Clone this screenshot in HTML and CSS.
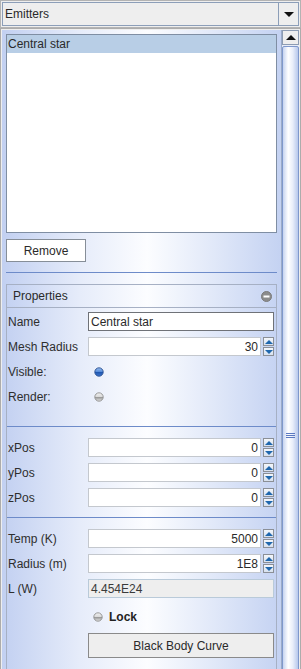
FILE: index.html
```html
<!DOCTYPE html>
<html>
<head>
<meta charset="utf-8">
<link rel="stylesheet" href="styles.css">
</head>
<body>
<div class="combo">
  <div class="combo-field">Emitters</div>
  <div class="combo-btn"><span class="tri-down"></span></div>
</div>
<div class="scrollpane">
  <div class="viewport">
    <div class="list">
      <div class="list-item selected">Central star</div>
    </div>
    <div class="btn remove">Remove</div>
    <div class="hsep"></div>
    <div class="props">
      <div class="props-head">
        <span>Properties</span>
        <svg class="minus" width="11" height="11" viewBox="0 0 11 11"><circle cx="5.5" cy="5.5" r="5" fill="#8c8c8c" stroke="#7a7a7a" stroke-width="1"/><rect x="2.5" y="4.5" width="6" height="2" fill="#ffffff"/></svg>
      </div>
      <div class="props-body">
        <div class="row"><span class="lbl">Name</span><div class="field dark">Central star</div></div>
        <div class="row"><span class="lbl">Mesh Radius</span><div class="spinner"><div class="field num">30</div><div class="spin"><span class="sb up"></span><span class="sb down"></span></div></div></div>
        <div class="row"><span class="lbl">Visible:</span>
          <svg class="radio" width="10" height="10" viewBox="0 0 10 10"><defs><linearGradient id="gb" x1="0" y1="0" x2="0" y2="1"><stop offset="0" stop-color="#9cc0f0"/><stop offset="0.5" stop-color="#4f86d6"/><stop offset="0.55" stop-color="#1f56b0"/><stop offset="1" stop-color="#3f78d0"/></linearGradient></defs><circle cx="5" cy="5" r="4.2" fill="url(#gb)" stroke="#2a4f8e" stroke-width="0.9"/></svg>
        </div>
        <div class="row"><span class="lbl">Render:</span>
          <svg class="radio" width="10" height="10" viewBox="0 0 10 10"><defs><linearGradient id="gg" x1="0" y1="0" x2="0" y2="1"><stop offset="0" stop-color="#f2f2f2"/><stop offset="0.5" stop-color="#d8d8d8"/><stop offset="0.55" stop-color="#9a9a9a"/><stop offset="1" stop-color="#e6e6e6"/></linearGradient></defs><circle cx="5" cy="5" r="4.2" fill="url(#gg)" stroke="#8e8e8e" stroke-width="0.9"/></svg>
        </div>
        <div class="psep first"></div>
        <div class="row after-sep"><span class="lbl">xPos</span><div class="spinner"><div class="field num">0</div><div class="spin"><span class="sb up"></span><span class="sb down"></span></div></div></div>
        <div class="row"><span class="lbl">yPos</span><div class="spinner"><div class="field num">0</div><div class="spin"><span class="sb up"></span><span class="sb down"></span></div></div></div>
        <div class="row"><span class="lbl">zPos</span><div class="spinner"><div class="field num">0</div><div class="spin"><span class="sb up"></span><span class="sb down"></span></div></div></div>
        <div class="psep second"></div>
        <div class="row after-sep"><span class="lbl">Temp (K)</span><div class="spinner"><div class="field num">5000</div><div class="spin"><span class="sb up"></span><span class="sb down"></span></div></div></div>
        <div class="row"><span class="lbl">Radius (m)</span><div class="spinner"><div class="field num">1E8</div><div class="spin"><span class="sb up"></span><span class="sb down"></span></div></div></div>
        <div class="row"><span class="lbl">L (W)</span><div class="field ro">4.454E24</div></div>
        <div class="row lockrow"><span></span>
          <div class="lock">
            <svg class="radio" width="10" height="10" viewBox="0 0 10 10"><defs><linearGradient id="gl" x1="0" y1="0" x2="0" y2="1"><stop offset="0" stop-color="#f2f2f2"/><stop offset="0.5" stop-color="#d8d8d8"/><stop offset="0.55" stop-color="#9a9a9a"/><stop offset="1" stop-color="#e6e6e6"/></linearGradient></defs><circle cx="5" cy="5" r="4.2" fill="url(#gl)" stroke="#8e8e8e" stroke-width="0.9"/></svg>
            <b>Lock</b>
          </div>
        </div>
        <div class="row btnrow"><span></span><div class="btn bbc">Black Body Curve</div></div>
      </div>
    </div>
  </div>
  <div class="vscroll">
    <div class="sc-up"><span class="tri-up"></span></div>
    <div class="thumb"><div class="grip"><i></i><i></i><i></i></div></div>
  </div>
</div>
</body>
</html>
```
FILE: styles.css
```css
html, body {
  margin: 0;
  padding: 0;
}
body {
  width: 301px;
  height: 669px;
  overflow: hidden;
  background: #eeeeee;
  font-family: "Liberation Sans", Arial, sans-serif;
  font-size: 12px;
  color: #333333;
}
.combo {
  height: 28px;
  box-sizing: border-box;
  border: 1px solid #b3b3b3;
  padding: 1px;
  display: flex;
  background: #eeeeee;
}
.combo-field {
  flex: 1;
  border: 1px solid #8c9eb8;
  display: flex;
  align-items: center;
  padding-left: 2px;
  color: #2a2a2a;
}
.combo-btn {
  width: 19px;
  border: 1px solid #8c9eb8;
  border-left: none;
  display: flex;
  align-items: center;
  justify-content: center;
}
.tri-down {
  width: 0;
  height: 0;
  border-left: 5px solid transparent;
  border-right: 5px solid transparent;
  border-top: 5px solid #111111;
}
.tri-up {
  width: 0;
  height: 0;
  border-left: 5px solid transparent;
  border-right: 5px solid transparent;
  border-bottom: 5px solid #111111;
}
.scrollpane {
  height: 660px;
  box-sizing: border-box;
  border: 1px solid #acacac;
  padding: 1px;
  display: flex;
}
.viewport {
  flex: 1;
  padding: 4px 4px 0 4px;
  background: linear-gradient(to right, #c2d0f1 0%, #e6ecfa 28%, #fcfdff 52%, #e3eaf9 74%, #c4d2f2 100%);
  overflow: hidden;
}
.list {
  height: 199px;
  box-sizing: border-box;
  border: 1px solid #7f8ea3;
  background: #ffffff;
}
.list-item {
  height: 18px;
  line-height: 18px;
  padding-left: 1px;
  color: #2a2a2a;
}
.list-item.selected {
  background: #b8cee6;
}
.btn {
  box-sizing: border-box;
  display: flex;
  align-items: center;
  justify-content: center;
  color: #2a2a2a;
}
.remove {
  margin-top: 6px;
  width: 80px;
  height: 23px;
  border: 1px solid #868e98;
  background: #ffffff;
}
.hsep {
  margin-top: 10px;
  height: 1px;
  background: #6d8bc9;
}
.props {
  margin-top: 11px;
  border: 1px solid #a6b0c4;
}
.props-head {
  height: 22px;
  display: flex;
  align-items: center;
  justify-content: space-between;
  padding: 0 4px 0 6px;
  border-bottom: 1px solid #a6b0c4;
  color: #2a2a2a;
}
.minus {
  display: block;
}
.props-body {
  padding: 4px 2px 40px 1px;
}
.row {
  display: grid;
  grid-template-columns: 80px 1fr;
  align-items: center;
  height: 19px;
  margin-top: 6px;
}
.props-body > .row:first-child {
  margin-top: 0;
}
.lbl {
  color: #2e2e2e;
  white-space: nowrap;
}
.field {
  box-sizing: border-box;
  height: 19px;
  border: 1px solid #c4c8ce;
  background: #ffffff;
  padding: 0 2px;
  display: flex;
  align-items: center;
  color: #2a2a2a;
  white-space: nowrap;
}
.field.dark {
  border-color: #6f7278;
}
.field.num {
  justify-content: flex-end;
}
.field.ro {
  background: #eeeeee;
  border-color: #b9cad9;
  color: #3a3a3a;
}
.spinner {
  display: flex;
  gap: 2px;
}
.spinner .field {
  flex: 1;
}
.spin {
  width: 11px;
  display: flex;
  flex-direction: column;
  gap: 1px;
}
.sb {
  box-sizing: border-box;
  height: 9px;
  border: 1px solid #8b8f96;
  background: linear-gradient(#f4f7fb, #d6e0ee);
  display: flex;
  align-items: center;
  justify-content: center;
}
.sb.up::after {
  content: "";
  border-left: 4px solid transparent;
  border-right: 4px solid transparent;
  border-bottom: 4px solid #1f67ad;
}
.sb.down::after {
  content: "";
  border-left: 4px solid transparent;
  border-right: 4px solid transparent;
  border-top: 4px solid #1f67ad;
}
.radio {
  display: block;
  margin-left: 6px;
}
.psep {
  height: 1px;
  background: #6d8bc9;
  margin-left: -1px;
  margin-right: -2px;
}
.psep.first {
  margin-top: 20px;
}
.psep.second {
  margin-top: 10px;
}
.row.after-sep {
  margin-top: 11px;
}
.lockrow {
  margin-top: 9px;
}
.lock {
  display: flex;
  align-items: center;
  gap: 6px;
  color: #222222;
}
.lock .radio {
  margin-left: 5px;
}
.btnrow {
  height: 25px;
  margin-top: 7px;
}
.bbc {
  height: 25px;
  border: 1px solid #8a8a8a;
  background: #eeeeee;
}
.vscroll {
  width: 18px;
  box-sizing: border-box;
  border-left: 1px solid #9aabc8;
  display: flex;
  flex-direction: column;
  background: #e8edf7;
}
.sc-up {
  height: 15px;
  box-sizing: border-box;
  border: 1px solid #8d9cb3;
  background: #eeeeee;
  display: flex;
  align-items: center;
  justify-content: center;
}
.thumb {
  flex: 1;
  margin: 1px 0 0 0;
  box-sizing: border-box;
  border: 1px solid #7f98cc;
  border-radius: 2px;
  background: linear-gradient(to right, #c6d4f0 0%, #ffffff 35%, #e9eefa 65%, #b7c8ec 100%);
  padding-top: 386px;
  display: flex;
  flex-direction: column;
  align-items: center;
}
.grip {
  display: flex;
  flex-direction: column;
  gap: 1px;
}
.grip i {
  display: block;
  width: 9px;
  height: 1px;
  background: #5b79c1;
}
```
